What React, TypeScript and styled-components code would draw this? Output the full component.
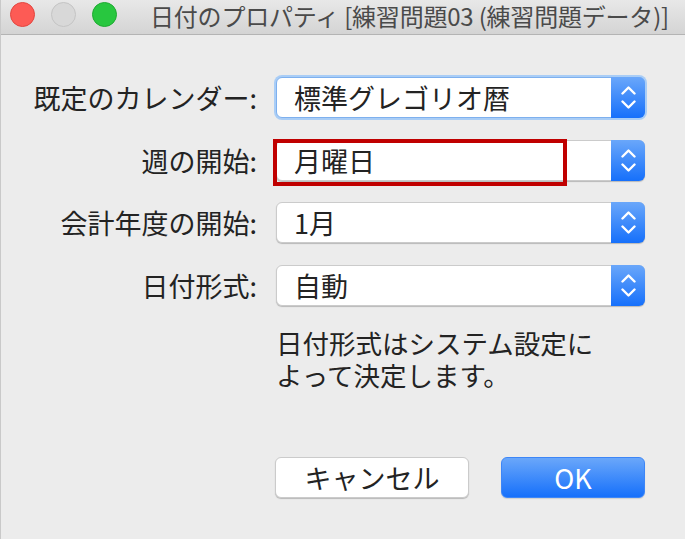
import React from "react";
import styled, { createGlobalStyle } from "styled-components";

const GlobalStyle = createGlobalStyle`
  html, body {
    margin: 0;
    padding: 0;
    background: #ececec;
  }
  body {
    font-family: "Noto Sans CJK JP", "Noto Sans", sans-serif;
    color: #232323;
  }
  * { box-sizing: border-box; }
`;

const Window = styled.div`
  width: 685px;
  height: 539px;
  background: #ececec;
  border-left: 1px solid #c9c9c9;
  display: flex;
  flex-direction: column;
  overflow: hidden;
`;

const TitleBar = styled.div`
  height: 35px;
  flex: 0 0 35px;
  display: flex;
  align-items: center;
  padding-left: 9px;
  background: linear-gradient(#e8e8e8, #d4d4d4);
  border-bottom: 1px solid #b4b4b4;
`;

const Lights = styled.div`
  display: flex;
  gap: 16px;
  margin-top: -6px;
`;

const Light = styled.span<{ $fill: string; $edge: string }>`
  width: 25px;
  height: 25px;
  border-radius: 50%;
  background: ${(p) => p.$fill};
  border: 1px solid ${(p) => p.$edge};
`;

const Title = styled.div`
  margin-left: 33px;
  margin-top: -3px;
  font-size: 24px;
  line-height: 30px;
  color: #4a4a4a;
  white-space: nowrap;
  letter-spacing: -0.2px;
`;

const Content = styled.div`
  display: grid;
  grid-template-columns: 256px 369px;
  grid-auto-rows: auto;
  column-gap: 19px;
  row-gap: 21.5px;
  padding-top: 42px;
  align-items: center;
`;

const Label = styled.div`
  text-align: right;
  font-size: 27px;
  line-height: 41px;
  white-space: nowrap;
  color: #232323;
`;

const PopupWrap = styled.div`
  position: relative;
`;

const Popup = styled.div<{ $focused?: boolean }>`
  height: 41px;
  display: flex;
  align-items: stretch;
  background: #ffffff;
  border-radius: 6px;
  border: 1px solid ${(p) => (p.$focused ? "#7eb0ee" : "#cbcbcb")};
  box-shadow: ${(p) =>
    p.$focused
      ? "0 0 0 2px #a9cdf6"
      : "0 1px 1px rgba(0,0,0,0.22)"};
`;

const PopupText = styled.div`
  flex: 1;
  padding-left: 17px;
  font-size: 27px;
  line-height: 39px;
  color: #232323;
  white-space: nowrap;
`;

const Stepper = styled.div`
  width: 34px;
  margin: -1px -1px -1px 0;
  border-radius: 0 6px 6px 0;
  background: linear-gradient(#6aa7fa, #1670fb);
  display: flex;
  align-items: center;
  justify-content: center;
`;

const Highlight = styled.div`
  position: absolute;
  left: -3px;
  top: -1px;
  width: 294px;
  height: 47px;
  border: 4px solid #c00000;
  pointer-events: none;
`;

const Help = styled.div`
  grid-column: 2;
  display: flex;
  flex-direction: column;
  font-size: 26.5px;
  color: #232323;
  white-space: nowrap;
`;

const HelpLine = styled.div`
  height: 32px;
  line-height: 32px;
`;

const Buttons = styled.div`
  grid-column: 2;
  display: flex;
  justify-content: space-between;
  margin-left: -1px;
  margin-top: 44px;
`;

const Button = styled.button<{ $primary?: boolean; $w: number }>`
  width: ${(p) => p.$w}px;
  height: 41px;
  border-radius: 6px;
  font-family: inherit;
  font-size: 27px;
  line-height: 39px;
  padding: 0;
  cursor: default;
  color: ${(p) => (p.$primary ? "#ffffff" : "#232323")};
  background: ${(p) =>
    p.$primary ? "linear-gradient(#6aa7fa, #1670fb)" : "#ffffff"};
  border: 1px solid ${(p) => (p.$primary ? "#3d86f7" : "#cbcbcb")};
  box-shadow: ${(p) =>
    p.$primary ? "0 1px 1px rgba(0,0,0,0.12)" : "0 1px 1px rgba(0,0,0,0.22)"};
`;

const Chevrons = () => (
  <svg width="15" height="25" viewBox="0 0 15 25" fill="none">
    <path d="M1.5 8.5 L7.5 2.5 L13.5 8.5" stroke="#fff" strokeWidth="2.4" strokeLinecap="round" strokeLinejoin="round" />
    <path d="M1.5 16.5 L7.5 22.5 L13.5 16.5" stroke="#fff" strokeWidth="2.4" strokeLinecap="round" strokeLinejoin="round" />
  </svg>
);

const rows: { label: string; value: string; focused?: boolean; marked?: boolean }[] = [
  { label: "既定のカレンダー:", value: "標準グレゴリオ暦", focused: true },
  { label: "週の開始:", value: "月曜日", marked: true },
  { label: "会計年度の開始:", value: "1月" },
  { label: "日付形式:", value: "自動" },
];

export default function App() {
  return (
    <>
      <GlobalStyle />
      <Window>
        <TitleBar>
          <Lights>
            <Light $fill="#fd5b55" $edge="#e2463f" />
            <Light $fill="#d8d8d8" $edge="#c4c4c4" />
            <Light $fill="#28c73f" $edge="#1eaa31" />
          </Lights>
          <Title>日付のプロパティ [練習問題03 (練習問題データ)]</Title>
        </TitleBar>
        <Content>
          {rows.map((r) => (
            <React.Fragment key={r.label}>
              <Label>{r.label}</Label>
              <PopupWrap>
                <Popup $focused={r.focused}>
                  <PopupText>{r.value}</PopupText>
                  <Stepper>
                    <Chevrons />
                  </Stepper>
                </Popup>
                {r.marked && <Highlight />}
              </PopupWrap>
            </React.Fragment>
          ))}
          <Help>
            <HelpLine>日付形式はシステム設定に</HelpLine>
            <HelpLine>よって決定します。</HelpLine>
          </Help>
          <Buttons>
            <Button $w={194}>キャンセル</Button>
            <Button $w={144} $primary>
              OK
            </Button>
          </Buttons>
        </Content>
      </Window>
    </>
  );
}
